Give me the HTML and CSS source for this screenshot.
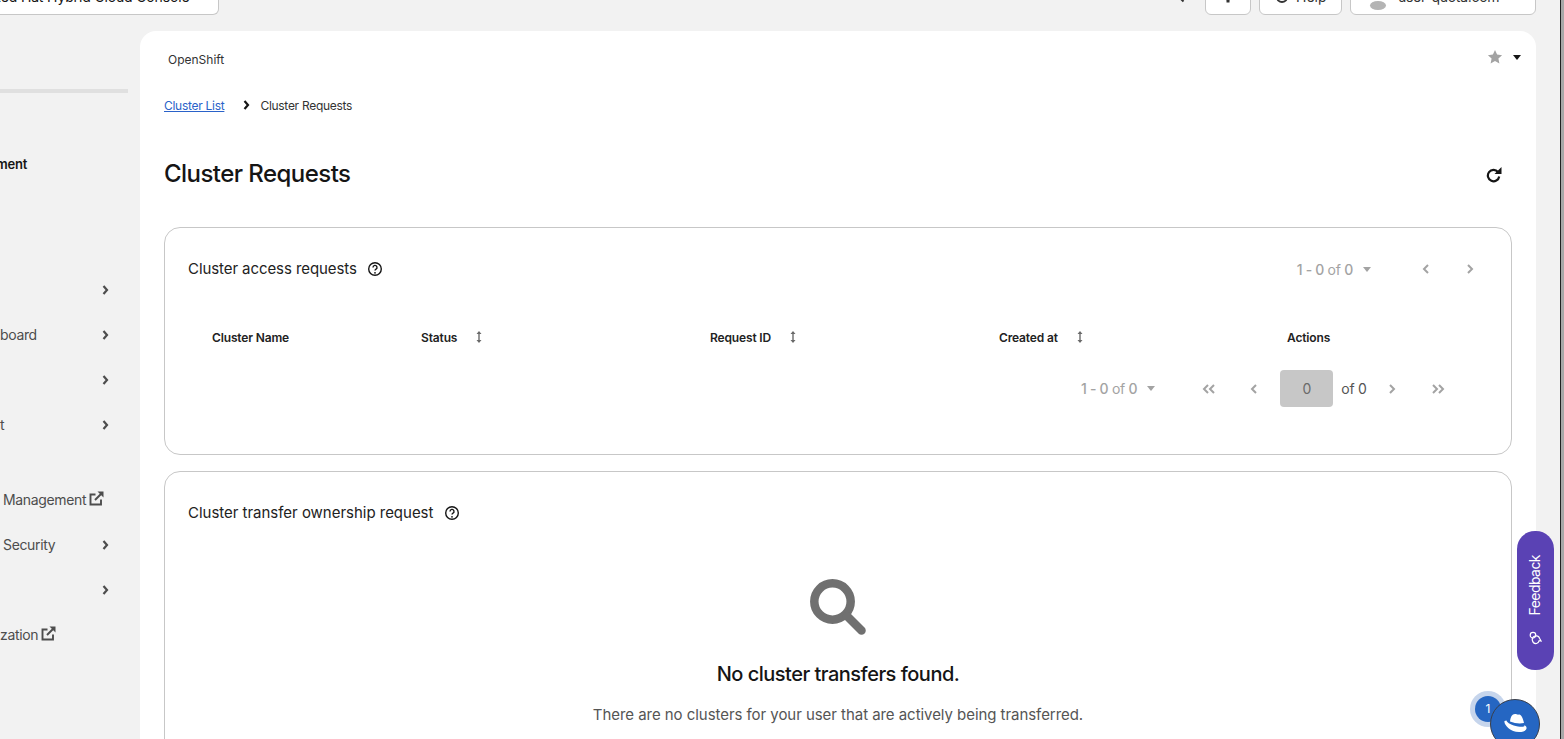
FILE: index.html
```html
<!DOCTYPE html>
<html lang="en">
<head>
    <meta charset="UTF-8">
    <title>Cluster Requests | Red Hat OpenShift Cluster Manager</title>
    <link rel="stylesheet" href="styles.css">
</head>
<body>

    <div class="shell">

        <!-- Top bar, scrolled mostly out of view -->
        <header class="topbar">
            <div class="switcher">Red Hat Hybrid Cloud Console</div>
            <div class="topbar-tools">
                <svg class="top-search" viewBox="0 0 16 16"><circle cx="6.500" cy="6.500" r="5" /><path d="M10.500 10.500l4 4" /></svg>
                <div class="top-btn top-btn-gear">
                    <svg class="gear" viewBox="0 0 12 12"><circle cx="6" cy="5" r="4.500" /><rect x="4.500" y="8" width="3" height="3.500" /></svg>
                </div>
                <div class="top-btn top-btn-help"><span class="help-ring"></span>Help</div>
                <div class="top-btn top-btn-user"><span class="avatar"></span>user-quota.com</div>
            </div>
        </header>

        <div class="layout">

            <!-- Side navigation, cut off by the window's left edge -->
            <nav class="sidebar">
                <div class="nav-rule"></div>
                <div class="nav-heading">ment</div>
                <ul class="nav-list">
                    <li class="nav-item"><span></span><svg class="chev" viewBox="0 0 8 12"><path d="M2.500 2l3.500 4-3.500 4" /></svg></li>
                    <li class="nav-item"><span>board</span><svg class="chev" viewBox="0 0 8 12"><path d="M2.500 2l3.500 4-3.500 4" /></svg></li>
                    <li class="nav-item"><span></span><svg class="chev" viewBox="0 0 8 12"><path d="M2.500 2l3.500 4-3.500 4" /></svg></li>
                    <li class="nav-item"><span>t</span><svg class="chev" viewBox="0 0 8 12"><path d="M2.500 2l3.500 4-3.500 4" /></svg></li>
                </ul>
                <ul class="nav-list nav-list-second">
                    <li class="nav-item nav-indent"><span class="nav-link">Management<svg class="ext" viewBox="0 0 15 15"><path d="M12 8.500V13.500H1.500V3.500H6.500" /><path d="M6 9l6-6" /><path class="ext-tip" d="M8.500 .5H14.500V6.500z" /></svg></span></li>
                    <li class="nav-item nav-indent"><span>Security</span><svg class="chev" viewBox="0 0 8 12"><path d="M2.500 2l3.500 4-3.500 4" /></svg></li>
                    <li class="nav-item"><span></span><svg class="chev" viewBox="0 0 8 12"><path d="M2.500 2l3.500 4-3.500 4" /></svg></li>
                    <li class="nav-item"><span class="nav-link nav-link-cut">ization<svg class="ext" viewBox="0 0 15 15"><path d="M12 8.500V13.500H1.500V3.500H6.500" /><path d="M6 9l6-6" /><path class="ext-tip" d="M8.500 .5H14.500V6.500z" /></svg></span></li>
                </ul>
            </nav>

            <main class="page">
                <div class="app-row">
                    <span class="app-name">OpenShift</span>
                    <div class="fav">
                        <svg class="star" viewBox="0 0 16 16"><path d="M8 1l2.100 4.600 5 .6-3.700 3.400 1 5L8 12.100 3.600 14.600l1-5L.9 6.200l5-.6z" /></svg>
                        <span class="caret caret-dark"></span>
                    </div>
                </div>

                <div class="breadcrumb">
                    <a href="#">Cluster List</a>
                    <svg class="chev chev-crumb" viewBox="0 0 8 12"><path d="M2.500 2l3.500 4-3.500 4" /></svg>
                    <span>Cluster Requests</span>
                </div>

                <div class="title-row">
                    <h1>Cluster Requests</h1>
                    <svg class="refresh" viewBox="0 0 16 16"><path d="M12 5A5.700 5.700 0 1 0 13.200 9.500" /><path class="refresh-tip" d="M8.500 7H15.500V0z" /></svg>
                </div>

                <section class="card card-access">
                    <div class="card-head">
                        <h2>Cluster access requests</h2>
                        <svg class="help" viewBox="0 0 16 16"><circle cx="8" cy="8" r="6.300" /><path d="M6 6.400a2 2 0 1 1 3 1.700c-.7.400-1 .8-1 1.500" /><circle class="help-dot" cx="8" cy="11.800" r=".9" /></svg>
                        <div class="pager pager-top">
                            <span class="pager-range"><b>1 - 0</b> of <b>0</b></span>
                            <span class="caret"></span>
                            <svg class="pager-chev pager-prev" viewBox="0 0 8 12"><path d="M6 2L2 6l4 4" /></svg>
                            <svg class="pager-chev pager-next" viewBox="0 0 8 12"><path d="M2 2l4 4-4 4" /></svg>
                        </div>
                    </div>

                    <div class="table-head">
                        <div class="col col-name">Cluster Name</div>
                        <div class="col col-status">Status<svg class="sort" viewBox="0 0 8 14"><path d="M4 2v10" /><path class="sort-tip" d="M1.500 4L4 1l2.500 3zM1.500 10L4 13l2.500-3z" /></svg></div>
                        <div class="col col-request">Request ID<svg class="sort" viewBox="0 0 8 14"><path d="M4 2v10" /><path class="sort-tip" d="M1.500 4L4 1l2.500 3zM1.500 10L4 13l2.500-3z" /></svg></div>
                        <div class="col col-created">Created at<svg class="sort" viewBox="0 0 8 14"><path d="M4 2v10" /><path class="sort-tip" d="M1.500 4L4 1l2.500 3zM1.500 10L4 13l2.500-3z" /></svg></div>
                        <div class="col col-actions">Actions</div>
                    </div>

                    <div class="pager pager-bottom">
                        <span class="pager-range"><b>1 - 0</b> of <b>0</b></span>
                        <span class="caret"></span>
                        <svg class="pager-chev pager-first" viewBox="0 0 14 12"><path d="M6 2L2 6l4 4M12 2L8 6l4 4" /></svg>
                        <svg class="pager-chev pager-back" viewBox="0 0 8 12"><path d="M6 2L2 6l4 4" /></svg>
                        <span class="page-input">0</span>
                        <span class="page-total">of 0</span>
                        <svg class="pager-chev pager-fwd" viewBox="0 0 8 12"><path d="M2 2l4 4-4 4" /></svg>
                        <svg class="pager-chev pager-last" viewBox="0 0 14 12"><path d="M2 2l4 4-4 4M8 2l4 4-4 4" /></svg>
                    </div>
                </section>

                <section class="card card-transfer">
                    <div class="card-head">
                        <h2>Cluster transfer ownership request</h2>
                        <svg class="help" viewBox="0 0 16 16"><circle cx="8" cy="8" r="6.300" /><path d="M6 6.400a2 2 0 1 1 3 1.700c-.7.400-1 .8-1 1.500" /><circle class="help-dot" cx="8" cy="11.800" r=".9" /></svg>
                    </div>
                    <div class="empty">
                        <svg class="empty-icon" viewBox="0 0 56 56"><circle cx="22.500" cy="22.500" r="18.200" /><path d="M37 37l14.500 14.500" /></svg>
                        <h3>No cluster transfers found.</h3>
                        <p>There are no clusters for your user that are actively being transferred.</p>
                    </div>
                </section>
            </main>
        </div>

        <!-- Floating widgets -->
        <button class="feedback"><span>Feedback</span>
            <svg class="feedback-icon" viewBox="0 0 14 14"><path d="M1.500 8.500a3.800 3.800 0 1 1 5 3.200L4 13l.3-1.800a3.800 3.800 0 0 1-2.800-2.700z" /><circle cx="9.800" cy="5" r="2.800" /></svg>
        </button>
        <div class="chat">
            <span class="chat-badge">1</span>
            <div class="chat-bubble">
                <svg class="hat" viewBox="0 0 24 20"><path d="M7 8.500C7.500 4 9 1 12 1c1.500 0 2.500 1 4 .5 2-.5 4 3.500 5 8.500-4 1-9 .5-14-1.500z" /><path d="M1.500 8C.5 11 7 19 16 19c5 0 8-2 7.500-4.500-.3-1.500-1.500-2-2-2.500.5 2-2.500 2-6.500 1.500C9 12.500 4 10 3.500 7.500z" /></svg>
            </div>
        </div>
        <div class="window-edge"></div>
    </div>

</body>
</html>
```

FILE: styles.css
```css
* {
    box-sizing: border-box;
}

html, body {
    height: 100%;
    margin: 0;
    overflow: hidden;
}

body {
    font-family: "Inter", "Liberation Sans", sans-serif;
    background-color: #f2f2f2;
    color: #151515;
}

.shell {
    position: relative;
    height: 739px;
    overflow: hidden;
}

ul {
    list-style: none;
    margin: 0;
    padding: 0;
}

/* Top bar */
.topbar {
    display: flex;
    justify-content: space-between;
    height: 52px;
    margin-top: -21px;
    padding: 0 28px 16px 0;
}

.switcher {
    width: 219px;
    padding-left: 0;
    background-color: white;
    border: 1px solid #c7c7c7;
    border-left: none;
    border-radius: 0 0 6px 0;
    font-size: 14px;
    letter-spacing: -0.15px;
    line-height: 34px;
    text-indent: -8px;
    overflow: hidden;
    white-space: nowrap;
}

.topbar-tools {
    display: flex;
    gap: 8px;
}

.top-search {
    width: 16px;
    height: 16px;
    margin-top: 8px;
    margin-right: 12px;
    fill: none;
    stroke: #333;
    stroke-width: 2;
}

.top-btn {
    display: flex;
    align-items: center;
    background-color: white;
    border: 1px solid #c7c7c7;
    border-radius: 6px;
    font-size: 14px;
    line-height: 20px;
    overflow: hidden;
    color: #333;
}

.top-btn-gear {
    justify-content: center;
    width: 46px;
}

.gear {
    width: 12px;
    height: 12px;
    fill: #333;
}

.top-btn-help {
    width: 83px;
    gap: 8px;
    padding-left: 16px;
}

.help-ring {
    width: 12px;
    height: 12px;
    border: 2px solid #333;
    border-radius: 50%;
}

.top-btn-user {
    width: 186px;
    gap: 12px;
    padding-left: 19px;
    letter-spacing: -0.3px;
    white-space: nowrap;
}

.avatar {
    flex: 0 0 16px;
    align-self: flex-end;
    height: 9px;
    margin-bottom: 4px;
    background-color: #b4b4b4;
    border-radius: 50%;
}

/* Layout */
.layout {
    display: flex;
    height: 708px;
}

.sidebar {
    flex: 0 0 140px;
    padding-right: 12px;
    font-size: 14px;
    color: #4d4d4d;
}

.nav-rule {
    height: 4px;
    margin-top: 58px;
    background-color: #e0e0e0;
}

.nav-heading {
    margin-top: 61px;
    font-size: 13px;
    font-weight: 600;
    letter-spacing: -0.2px;
    line-height: 20px;
    text-indent: -4px;
    color: #151515;
}

.nav-list {
    margin-top: 93px;
}

.nav-list-second {
    margin-top: 30px;
}

.nav-item {
    display: flex;
    align-items: center;
    justify-content: space-between;
    height: 45px;
    padding-right: 19px;
    letter-spacing: -0.35px;
    line-height: 20px;
}

.nav-indent {
    padding-left: 3px;
}

.nav-link {
    display: flex;
    align-items: center;
    gap: 3px;
}

.nav-link-cut {
    margin-left: -3px;
}

.chev {
    width: 8px;
    height: 12px;
    fill: none;
    stroke: #4d4d4d;
    stroke-width: 2.200;
}

.ext {
    width: 15px;
    height: 15px;
    margin-bottom: 2px;
    fill: none;
    stroke: #4d4d4d;
    stroke-width: 1.900;
}

.ext-tip {
    fill: #4d4d4d;
    stroke: none;
}

/* Page */
.page {
    flex: 0 0 1396px;
    padding: 0 24px;
    background-color: white;
    border-radius: 16px 16px 0 0;
    overflow: hidden;
}

.app-row {
    display: flex;
    justify-content: space-between;
    align-items: center;
    height: 57px;
    padding: 0 0 0 4px;
    font-size: 12px;
    color: #333;
}

.fav {
    display: flex;
    align-items: center;
    gap: 10px;
    margin-bottom: 5px;
    margin-right: -9px;
}

.star {
    width: 16px;
    height: 16px;
    fill: #a3a3a3;
}

.caret {
    width: 0;
    height: 0;
    border-left: 4.500px solid transparent;
    border-right: 4.500px solid transparent;
    border-top: 5px solid #a3a3a3;
}

.caret-dark {
    border-top-color: #151515;
}

.breadcrumb {
    display: flex;
    align-items: center;
    height: 34px;
    font-size: 12px;
    letter-spacing: -0.28px;
    color: #333;
}

.breadcrumb a {
    color: #2a62c9;
}

.chev-crumb {
    margin: 0 10px 0 18px;
    stroke: #151515;
}

.title-row {
    display: flex;
    justify-content: space-between;
    align-items: center;
    height: 62px;
    margin-top: 21px;
    padding-right: 10px;
}

h1 {
    margin: 0;
    font-size: 24px;
    font-weight: 500;
    letter-spacing: -0.55px;
    line-height: 30px;
}

.refresh {
    width: 16px;
    height: 16px;
    margin-top: 1px;
    fill: none;
    stroke: #151515;
    stroke-width: 2.200;
}

.refresh-tip {
    fill: #151515;
    stroke: none;
}

.card {
    background-color: white;
    border: 1px solid #c7c7c7;
    border-radius: 16px;
}

.card-access {
    height: 228px;
    margin-top: 22px;
}

.card-transfer {
    height: 300px;
    margin-top: 16px;
}

.card-head {
    display: flex;
    align-items: center;
    height: 82px;
    padding: 0 37px 0 23px;
}

h2 {
    margin: 0;
    font-size: 15px;
    font-weight: 400;
    letter-spacing: -0.08px;
    line-height: 20px;
    color: #222;
}

.card-transfer h2 {
    letter-spacing: -0.02px;
}

.help {
    width: 16px;
    height: 16px;
    margin-left: 11px;
    fill: none;
    stroke: #151515;
    stroke-width: 1.400;
}

.card-access .help {
    margin-left: 10px;
}

.help-dot {
    fill: #151515;
    stroke: none;
}

.pager {
    display: flex;
    align-items: center;
    font-size: 14px;
    letter-spacing: -0.3px;
    color: #a3a3a3;
}

.pager-top {
    margin-left: auto;
}

.pager b {
    font-weight: 500;
}

.pager .caret {
    margin-left: 10px;
}

.pager-chev {
    width: 8px;
    height: 12px;
    fill: none;
    stroke: #a3a3a3;
    stroke-width: 2;
}

.pager-first, .pager-last {
    width: 14px;
}

.pager-prev {
    margin-left: 51px;
}

.pager-next {
    margin-left: 36px;
}

.table-head {
    display: grid;
    grid-template-columns: 209px 289px 289px 288px 1fr;
    align-items: center;
    height: 24px;
    margin-top: 15px;
    padding-left: 47px;
    font-size: 12px;
    font-weight: 600;
    letter-spacing: -0.15px;
    color: #222;
}

.col {
    display: flex;
    align-items: center;
    gap: 18px;
}

.sort {
    width: 8px;
    height: 14px;
    fill: none;
    stroke: #6a6a6a;
    stroke-width: 1.400;
}

.sort-tip {
    fill: #6a6a6a;
    stroke: none;
}

.pager-bottom {
    margin-top: 21px;
    padding-left: 916px;
}

.pager-first {
    margin-left: 47px;
}

.pager-back {
    margin-left: 34px;
}

.page-input {
    width: 53px;
    height: 37px;
    margin-left: 22px;
    background-color: #c7c7c7;
    border-radius: 4px;
    font-size: 14px;
    line-height: 37px;
    text-align: center;
    color: #6a6a6a;
}

.page-total {
    margin-left: 8px;
    color: #555;
}

.pager-fwd {
    margin-left: 22px;
}

.pager-last {
    margin-left: 35px;
}

.empty {
    display: flex;
    flex-direction: column;
    align-items: center;
    margin-top: 25px;
}

.empty-icon {
    width: 56px;
    height: 56px;
    fill: none;
    stroke: #707070;
    stroke-width: 8.500;
}

.empty-icon path {
    stroke-linecap: round;
}

h3 {
    margin: 24px 0 0;
    font-size: 20px;
    font-weight: 500;
    letter-spacing: -0.5px;
    line-height: 30px;
}

.empty p {
    margin: 16px 0 0;
    font-size: 15px;
    letter-spacing: -0.05px;
    line-height: 20px;
    color: #555;
}

/* Floating widgets */
.feedback {
    position: absolute;
    left: 1517px;
    top: 531px;
    display: flex;
    flex-direction: column;
    align-items: center;
    gap: 16px;
    width: 37px;
    height: 139px;
    padding: 24px 2px 0 0;
    background-color: #5a42b4;
    border: none;
    border-radius: 18px;
    color: white;
    font-family: inherit;
    font-size: 14px;
    letter-spacing: -0.55px;
}

.feedback span {
    writing-mode: vertical-rl;
    transform: rotate(180deg);
}

.feedback-icon {
    width: 14px;
    height: 14px;
    fill: none;
    stroke: white;
    stroke-width: 1.200;
    transform: rotate(-90deg);
}

.chat {
    position: absolute;
    left: 1472px;
    top: 690px;
}

.chat-badge {
    position: absolute;
    left: 3px;
    top: 6px;
    width: 26px;
    height: 26px;
    background-color: #2566c2;
    border-radius: 50%;
    box-shadow: 0 0 0 5px #c6d5ec;
    color: white;
    font-size: 12px;
    line-height: 26px;
    text-align: center;
}

.chat-bubble {
    position: absolute;
    left: 18px;
    top: 9px;
    display: flex;
    justify-content: center;
    width: 50px;
    height: 50px;
    padding-top: 13px;
    background-color: #2566c2;
    border: 1px solid #3a3f4a;
    border-radius: 50%;
}

.hat {
    width: 24px;
    height: 20px;
    fill: white;
}

.window-edge {
    position: absolute;
    left: 1560px;
    top: 0;
    bottom: 0;
    width: 4px;
    background-color: #a8a8a8;
    border-left: 1px solid #222;
}
```
